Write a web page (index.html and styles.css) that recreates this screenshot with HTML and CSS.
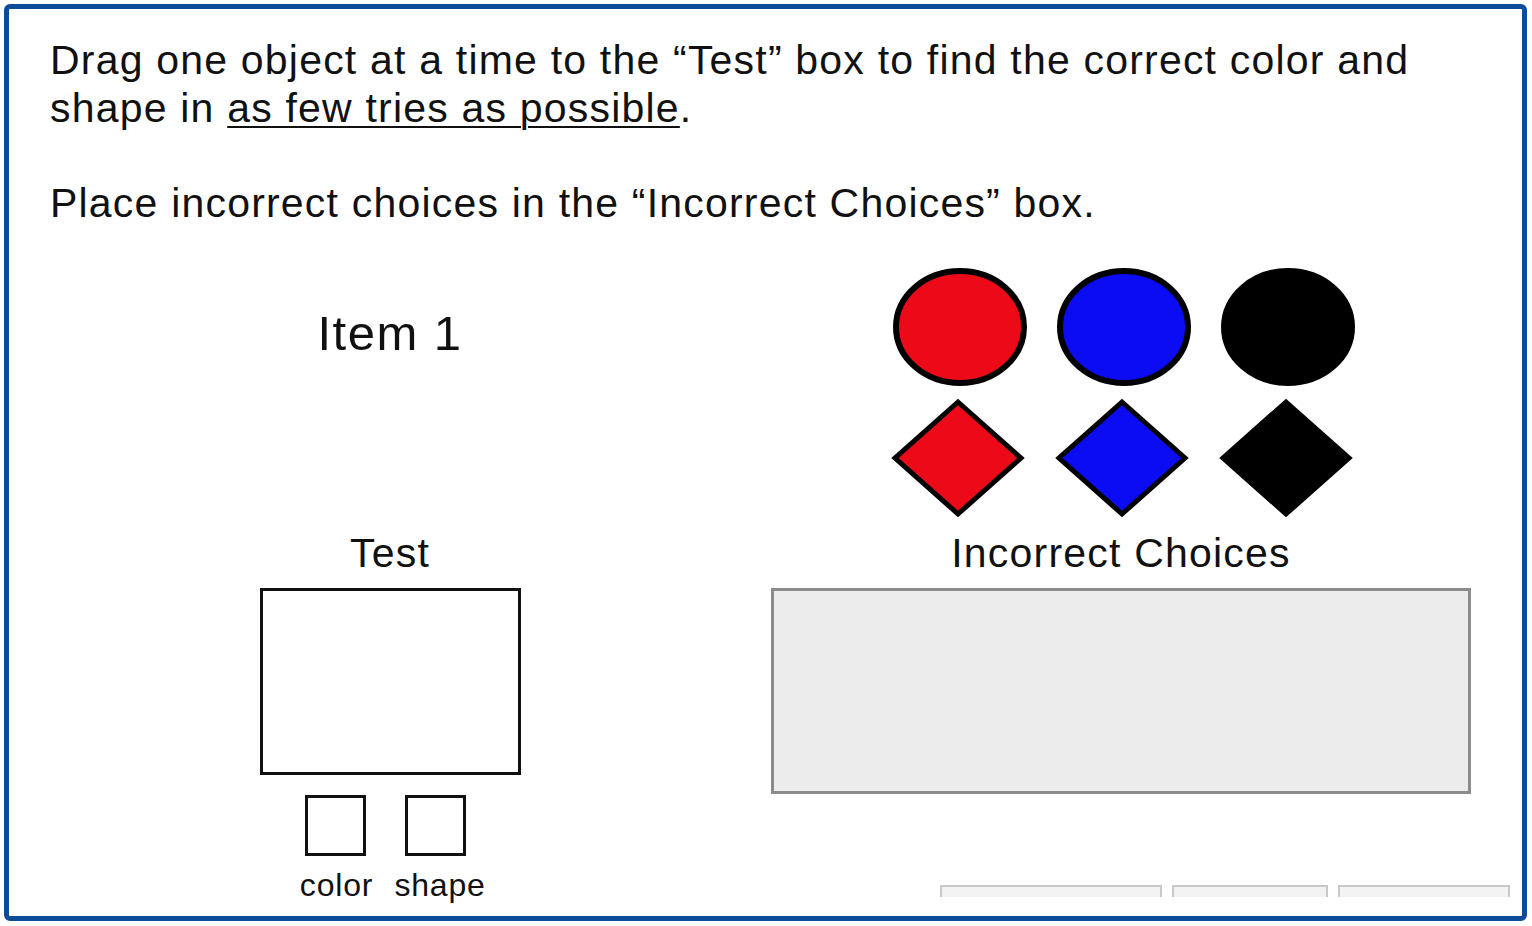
FILE: index.html
```html
<!DOCTYPE html>
<html lang="en">
<head>
    <meta charset="UTF-8">
    <meta name="viewport" content="width=device-width, initial-scale=1.0">
    <title>Item 1</title>
    <link rel="stylesheet" href="styles.css">
</head>
<body>

<div class="frame">

    <div class="intro">
        <p>Drag one object at a time to the “Test” box to find the correct color and<br>shape in <u>as few tries as possible</u>.</p>
        <p class="second">Place incorrect choices in the “Incorrect Choices” box.</p>
    </div>

    <div class="stage">
        <div class="item-title">Item 1</div>

        <div class="choices">
            <div class="shape-row">
                <svg width="140" height="122"><ellipse cx="70" cy="61" rx="64" ry="56" fill="#ec0a18" stroke="#000" stroke-width="6"/></svg>
                <svg width="140" height="122"><ellipse cx="70" cy="61" rx="64" ry="56" fill="#0c0cf4" stroke="#000" stroke-width="6"/></svg>
                <svg width="140" height="122"><ellipse cx="70" cy="61" rx="64" ry="56" fill="#000" stroke="#000" stroke-width="6"/></svg>
            </div>
            <div class="shape-row diamonds">
                <svg width="140" height="122"><polygon points="68,5 131,61 68,117 5,61" fill="#ec0a18" stroke="#000" stroke-width="5"/></svg>
                <svg width="140" height="122"><polygon points="68,5 131,61 68,117 5,61" fill="#0c0cf4" stroke="#000" stroke-width="5"/></svg>
                <svg width="140" height="122"><polygon points="68,5 131,61 68,117 5,61" fill="#000" stroke="#000" stroke-width="5"/></svg>
            </div>
        </div>

        <div class="label">Test</div>
        <div class="label">Incorrect Choices</div>

        <div class="test-area">
            <div class="test-box"></div>
            <div class="checks">
                <div class="check">
                    <div class="check-box"></div>
                    <span>color</span>
                </div>
                <div class="check">
                    <div class="check-box"></div>
                    <span class="shift">shape</span>
                </div>
            </div>
        </div>

        <div class="wrong-area">
            <div class="wrong-box"></div>
            <div class="tabs">
                <div class="tab wide"></div>
                <div class="tab mid"></div>
                <div class="tab last"></div>
            </div>
        </div>
    </div>

</div>

</body>
</html>
```

FILE: styles.css
```css
body{
    margin: 0;
    padding: 0;
    background: #fff;
    font-family: "Liberation Sans", Arial, sans-serif;
    color: #111;
}

.frame{
    box-sizing: border-box;
    margin: 4px 0 0 4px;
    width: 1523px;
    height: 917px;
    border: 5px solid #0e4c99;
    border-radius: 6px;
    overflow: hidden;
}

.intro{
    padding: 27px 0 0 41px;
    font-size: 41px;
    line-height: 48px;
    letter-spacing: 1.2px;
    white-space: nowrap;
}

.intro p{
    margin: 0;
}

.intro u{
    text-decoration-thickness: 2px;
    text-underline-offset: 4px;
}

.intro .second{
    margin-top: 47px;
}

.stage{
    display: grid;
    grid-template-columns: 762px 700px;
}

.item-title{
    font-size: 49px;
    line-height: 55px;
    letter-spacing: 1.5px;
    text-align: center;
    margin-top: 79px;
}

.choices{
    padding-top: 39px;
    padding-left: 6px;
    display: flex;
    flex-direction: column;
    align-items: center;
    gap: 9px;
}

.shape-row{
    display: flex;
    gap: 24px;
}

.shape-row svg{
    display: block;
}

.label{
    font-size: 41px;
    line-height: 46px;
    letter-spacing: 1.2px;
    text-align: center;
    margin-top: 11px;
}

.test-area{
    display: flex;
    flex-direction: column;
    align-items: center;
    padding-top: 12px;
}

.test-box{
    box-sizing: border-box;
    width: 261px;
    height: 187px;
    border: 3px solid #111;
}

.checks{
    display: flex;
    gap: 24px;
    margin-top: 20px;
    margin-left: -10px;
}

.check{
    display: flex;
    flex-direction: column;
    align-items: center;
    width: 76px;
}

.check-box{
    box-sizing: border-box;
    width: 61px;
    height: 61px;
    border: 3px solid #111;
}

.check span{
    font-size: 32px;
    line-height: 36px;
    letter-spacing: 0.8px;
    margin-top: 11px;
    margin-left: 3px;
}

.check .shift{
    margin-left: 10px;
}

.wrong-area{
    padding-top: 12px;
}

.wrong-box{
    box-sizing: border-box;
    width: 700px;
    height: 206px;
    background: #ececec;
    border: 3px solid #8c8c8c;
}

.tabs{
    display: flex;
    justify-content: flex-end;
    gap: 10px;
    margin-top: 91px;
    margin-right: -39px;
}

.tab{
    box-sizing: border-box;
    height: 12px;
    border: 2px solid #c9c9c9;
    border-bottom: none;
    background: #f3f3f3;
}

.wide{
    width: 222px;
}

.mid{
    width: 156px;
}

.last{
    width: 172px;
}
```
